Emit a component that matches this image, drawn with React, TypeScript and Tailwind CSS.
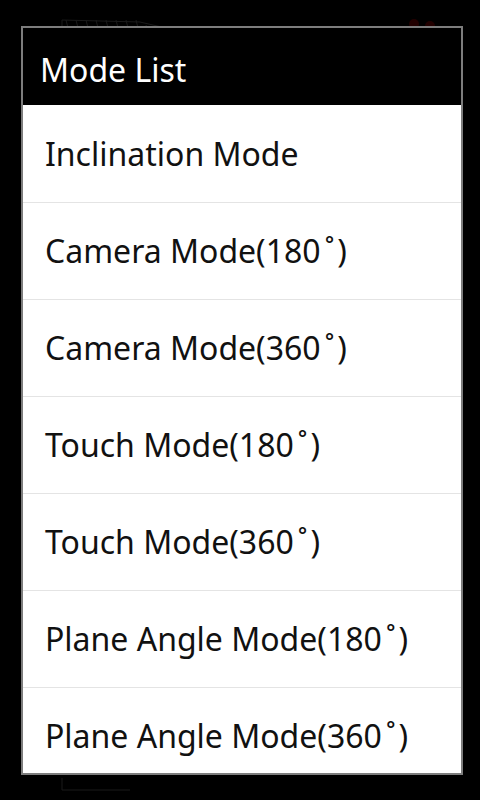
import React from "react";

const modes = [
  ["Inclination Mode", ""],
  ["Camera Mode(180", ")"],
  ["Camera Mode(360", ")"],
  ["Touch Mode(180", ")"],
  ["Touch Mode(360", ")"],
  ["Plane Angle Mode(180", ")"],
  ["Plane Angle Mode(360", ")"],
];

// faint gauge drawing behind the dialog
const Backdrop = () => (
  <svg
    className="absolute inset-0"
    width="480"
    height="800"
    viewBox="0 0 480 800"
  >
    <g stroke="#1a1a1a" strokeWidth="1" fill="none">
      <path d="M62 20 L62 100" />
      <path d="M62 20 L140 22 Q230 40 300 100" />
      <path d="M62 28 L140 30 Q225 48 290 100" />
      {Array.from({ length: 22 }).map((_, i) => {
        const x = 66 + i * 10;
        const y = 20 + (i > 7 ? (i - 7) * 5 : 0);
        return <path key={i} d={`M${x} ${y} L${x + 2} ${y + 8}`} />;
      })}
      <path d="M62 778 L62 790 L130 790" />
    </g>
    <g fill="#220000">
      <circle cx="414" cy="24" r="5" />
      <circle cx="430" cy="26" r="5" />
      <path d="M418 30 L432 75 L426 76 Z" />
    </g>
  </svg>
);

export default function App() {
  return (
    <div className="relative w-[480px] h-[800px] bg-black overflow-hidden font-['Noto_Sans','Open_Sans',sans-serif]">
      <Backdrop />
      <div className="relative pt-[26px] pl-[21px]">
        <div className="w-[442px] h-[749px] border-2 border-[#7d7d7d] bg-white flex flex-col overflow-hidden">
          <div className="h-[77px] shrink-0 bg-black flex items-center pl-[17px] pt-[6px]">
            <span className="text-white text-[32px] leading-none">Mode List</span>
          </div>
          <div className="flex flex-col">
            {modes.map(([m, tail], i) => (
              <div
                key={m}
                className={
                  "h-[97px] shrink-0 flex items-center pl-[22px] text-[#111] text-[32px] leading-none" +
                  (i > 0 ? " border-t border-[#e4e4e4]" : "")
                }
              >
                <span>{m}</span>
                {tail && (
                  <>
                    <span className="pl-[4px] pr-[3px]">˚</span>
                    <span>{tail}</span>
                  </>
                )}
              </div>
            ))}
          </div>
        </div>
      </div>
    </div>
  );
}
